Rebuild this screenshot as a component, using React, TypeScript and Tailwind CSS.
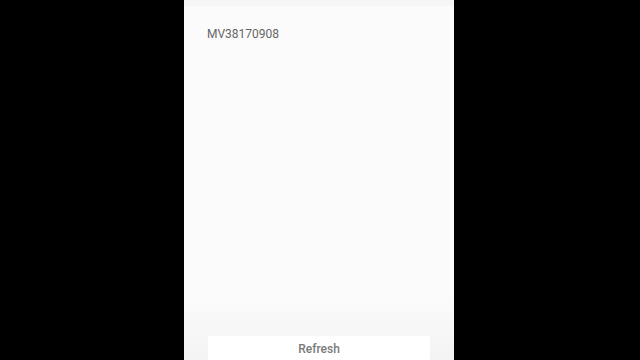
export default function App() {
  return (
    <div className="flex h-[360px] w-[640px] bg-black pl-[184px] font-['Roboto',sans-serif]">
      <div className="flex w-[270px] flex-col bg-[#fbfbfb]">
        {/* header strip */}
        <div className="h-[6px] bg-[#f6f6f6]" />
        <div className="px-[23px] pt-[21px] text-[12px] leading-[14px] text-[#666]">
          MV38170908
        </div>

        <div className="flex-1" />

        {/* bottom bar */}
        <div className="bg-gradient-to-b from-[#fbfbfb] to-[#f3f3f3] px-[24px] pt-[36px]">
          <button className="flex h-[24px] w-full items-start justify-center bg-white pt-[6px] text-[12px] font-medium leading-[14px] text-[#7a7a7a]">
            Refresh
          </button>
        </div>
      </div>
    </div>
  );
}
